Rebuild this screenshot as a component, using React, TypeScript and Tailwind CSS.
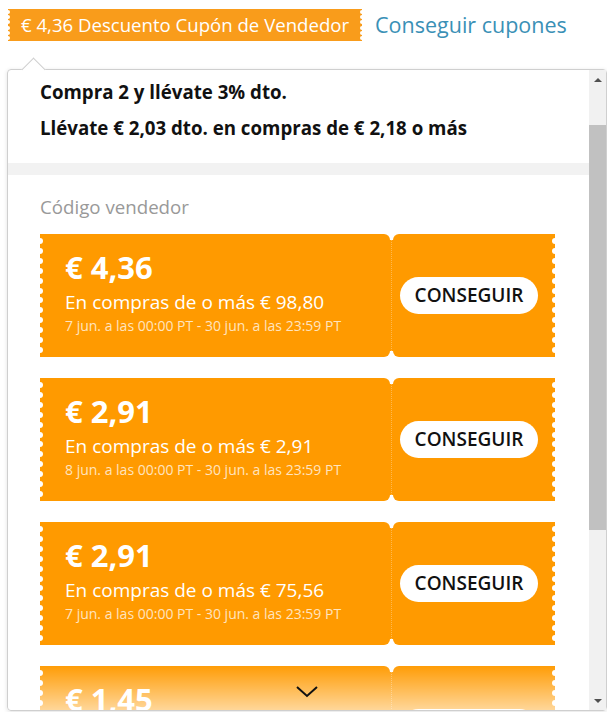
import { Fragment } from "react";

const coupons = [
  { amount: "€ 4,36", min: "En compras de o más € 98,80", dates: "7 jun. a las 00:00 PT - 30 jun. a las 23:59 PT" },
  { amount: "€ 2,91", min: "En compras de o más € 2,91", dates: "8 jun. a las 00:00 PT - 30 jun. a las 23:59 PT" },
  { amount: "€ 2,91", min: "En compras de o más € 75,56", dates: "7 jun. a las 00:00 PT - 30 jun. a las 23:59 PT" },
  { amount: "€ 1,45", min: "En compras de o más € 14,54", dates: "7 jun. a las 00:00 PT - 30 jun. a las 23:59 PT" },
];

// little white bites along a ticket edge
function Scallops({ side, count, size }: { side: "left" | "right"; count: number; size: number }) {
  return (
    <div
      className={
        "absolute top-0 bottom-0 flex flex-col justify-evenly " +
        (side === "left" ? "left-0 -translate-x-1/2" : "right-0 translate-x-1/2")
      }
    >
      {Array.from({ length: count }).map((_, i) => (
        <span key={i} className="block rounded-full bg-white" style={{ width: size, height: size }} />
      ))}
    </div>
  );
}

function Coupon({ amount, min, dates }: (typeof coupons)[number]) {
  return (
    <div className="flex h-[123px] w-[515px]">
      <div className="relative flex-1 rounded-r-[6px] bg-[#ff9a00] pl-[25px] pt-[15px] text-white">
        <Scallops side="left" count={12} size={6} />
        <div className="text-[31px] font-bold leading-[36px]">{amount}</div>
        <div className="mt-[5px] text-[19px] leading-[24px]">{min}</div>
        <div className="mt-[3px] text-[14px] leading-[18px] text-white/75">{dates}</div>
      </div>
      <div className="my-[6px] flex w-[3px] justify-center bg-[#ff9a00]">
        <div className="h-full border-l border-dotted border-white/30" />
      </div>
      <div className="relative flex w-[162px] items-center rounded-l-[6px] bg-[#ff9a00] pl-[7px]">
        <Scallops side="right" count={12} size={6} />
        <button className="h-[37px] w-[138px] rounded-full bg-white text-[19px] font-semibold text-[#111]">
          CONSEGUIR
        </button>
      </div>
    </div>
  );
}

export default function App() {
  return (
    <div className="min-h-screen bg-white pt-[9px] font-['Open_Sans',sans-serif]">
      <div className="ml-[8px] flex h-[32px] items-center">
        <div className="relative flex h-full items-center bg-[#f99c1b] px-[13px] text-[18.6px] text-white">
          <Scallops side="left" count={6} size={4} />
          € 4,36 Descuento Cupón de Vendedor
          <Scallops side="right" count={6} size={4} />
        </div>
        <a className="ml-[13px] text-[21.5px] text-[#3a90b6]">Conseguir cupones</a>
      </div>

      <div className="relative ml-[7px] mt-[28px] flex h-[642px] w-[600px] rounded-[4px] border border-[#cfcfcf] shadow-[0_1px_4px_rgba(0,0,0,0.12)]">
        {/* pointer */}
        <div className="absolute -top-[9px] left-[17px] h-[17px] w-[17px] rotate-45 border-l border-t border-[#cfcfcf] bg-white" />

        <div className="relative flex-1 overflow-hidden rounded-l-[4px]">
          <div className="px-[32px] pb-[22px] pt-[9px] text-[18.7px] font-bold text-[#111]">
            <p className="leading-[26px]">Compra 2 y llévate 3% dto.</p>
            <p className="mt-[10px] leading-[26px]">Llévate € 2,03 dto. en compras de € 2,18 o más</p>
          </div>
          <div className="h-[12px] bg-[#f2f2f2]" />
          <div className="px-[32px]">
            <p className="mb-[14px] mt-[19px] text-[18.7px] leading-[26px] text-[#999]">Código vendedor</p>
            <div className="flex flex-col gap-[21px]">
              {coupons.map((c, i) => (
                <Fragment key={i}>
                  <Coupon {...c} />
                </Fragment>
              ))}
            </div>
          </div>

          {/* fade + more */}
          <div className="absolute bottom-0 left-0 right-0 flex h-[46px] items-end justify-center bg-gradient-to-b from-white/0 to-white/60 pb-[12px]">
            <svg width="22" height="12" viewBox="0 0 22 12" className="translate-x-[8px]">
              <polyline points="1,1 11,10 21,1" fill="none" stroke="#111" strokeWidth="2" />
            </svg>
          </div>
        </div>

        {/* scrollbar */}
        <div className="flex w-[17px] flex-col bg-[#f1f1f1]">
          <div className="flex h-[17px] items-center justify-center pt-[2px]">
            <span className="block h-0 w-0 border-x-[4px] border-b-[4px] border-x-transparent border-b-[#505050]" />
          </div>
          <div className="mt-[38px] h-[405px] bg-[#c1c1c1]" />
          <div className="flex-1" />
          <div className="flex h-[17px] items-center justify-center pb-[2px]">
            <span className="block h-0 w-0 border-x-[4px] border-t-[4px] border-x-transparent border-t-[#505050]" />
          </div>
        </div>
      </div>
    </div>
  );
}
